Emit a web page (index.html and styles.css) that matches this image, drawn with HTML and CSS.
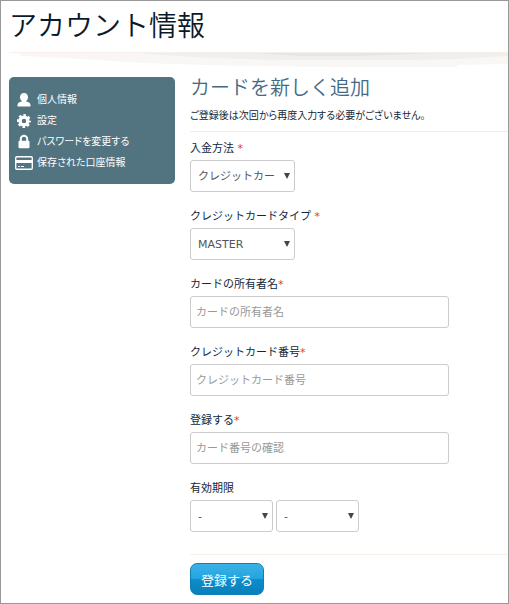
FILE: index.html
```html
<!DOCTYPE HTML>
<html lang="ja">
<head>
	<meta charset="utf-8">
	<title>アカウント情報</title>
	<link rel="stylesheet" href="styles.css">
</head>
<body>
	<header class="header">
		<h1>アカウント情報</h1>
		<svg class="header-shadow" viewBox="0 0 499 16" preserveAspectRatio="none" aria-hidden="true">
			<path fill="#f8f7f5" d="M10 1H499V12L448 13V15H326Q160 14 75 7L12 4z"/>
			<path fill="#efefed" d="M130 1H499V4L448 7L400 8H279Q180 6 130 1z"/>
			<path fill="#e5e6e4" d="M245 1H430L350 4H290z"/>
			<path fill="#fbeee8" d="M0 0H499V1H0z"/>
		</svg>
	</header>
	<div class="content">
		<ul class="menu">
			<li><a href="#">
				<svg class="menu-icon" viewBox="0 0 18 16" aria-hidden="true"><path fill="#fff" d="M9 1c2.500 0 4 1.700 4 4.200 0 1.700-.8 3-1.800 3.800v.4c2.700.5 4.300 1.600 4.300 3.800v1.300h-13v-1.300c0-2.200 1.600-3.300 4.300-3.800V9C5.800 8.200 5 6.900 5 5.200 5 2.700 6.500 1 9 1z"/></svg>
				個人情報</a></li>
			<li><a href="#">
				<svg class="menu-icon" viewBox="0 0 18 16" aria-hidden="true"><g fill="none" stroke="#fff"><circle cx="9" cy="8" r="3.900" stroke-width="3.400"/><circle cx="9" cy="8" r="6" stroke-width="2" stroke-dasharray="2.600 2.112" stroke-dashoffset="1.300"/></g></svg>
				設定</a></li>
			<li><a href="#">
				<svg class="menu-icon" viewBox="0 0 18 16" aria-hidden="true"><path fill="none" stroke="#fff" stroke-width="2" d="M5.800 8V5a3.200 3.200 0 0 1 6.400 0v3"/><rect x="3.500" y="6.800" width="11" height="7.400" rx="1" fill="#fff"/></svg>
				パスワードを変更する</a></li>
			<li><a href="#">
				<svg class="menu-icon" viewBox="0 0 18 16" aria-hidden="true"><rect x=".7" y="1.700" width="16.600" height="12.600" rx="1.200" fill="none" stroke="#fff" stroke-width="1.400"/><path fill="#fff" d="M1 5h16v3H1zM3 11h2v1H3zM6 11h3v1H6z"/></svg>
				保存された口座情報</a></li>
		</ul>
		<form class="form" action="#">
			<h2>カードを新しく追加</h2>
			<p class="note">ご登録後は次回から再度入力する必要がございません。</p>
			<div class="field">
				<label for="method">入金方法 <span class="required">*</span></label>
				<div class="select">
					<select id="method"><option>クレジットカード</option></select>
				</div>
			</div>
			<div class="field">
				<label for="type">クレジットカードタイプ <span class="required">*</span></label>
				<div class="select">
					<select id="type"><option>MASTER</option></select>
				</div>
			</div>
			<div class="field">
				<label for="owner">カードの所有者名<span class="required">*</span></label>
				<input type="text" id="owner" placeholder="カードの所有者名">
			</div>
			<div class="field">
				<label for="number">クレジットカード番号<span class="required">*</span></label>
				<input type="text" id="number" placeholder="クレジットカード番号">
			</div>
			<div class="field">
				<label for="confirm">登録する<span class="required">*</span></label>
				<input type="text" id="confirm" placeholder="カード番号の確認">
			</div>
			<div class="field">
				<label for="month">有効期限</label>
				<div class="expiry">
					<div class="select select-small">
						<select id="month"><option>-</option></select>
					</div>
					<div class="select select-small">
						<select id="year" aria-label="有効期限 年"><option>-</option></select>
					</div>
				</div>
			</div>
			<div class="actions">
				<button type="submit" class="button">登録する</button>
			</div>
		</form>
	</div>
</body>
</html>
```
FILE: styles.css
```css
* {
	box-sizing:border-box;
	}
body {
	margin:0;
	min-height:100vh;
	padding:0 0 8px 8px;
	border:1px solid #999;
	background:#fff;
	color:#12283a;
	font:11px/18px "DejaVu Sans", "Noto Sans CJK JP", sans-serif;
	}

/* Header */
h1 {
	margin:0;
	padding:3px 0 8px;
	color:#0a1a2a;
	font-family:"Noto Sans CJK JP", sans-serif;
	font-size:28px;
	font-weight:350;
	line-height:40px;
	}
.header-shadow {
	display:block;
	width:100%;
	height:16px;
	}

/* Columns */
.content {
	display:flex;
	align-items:flex-start;
	gap:15px;
	padding-top:9px;
	}

/* Menu */
.menu {
	flex:0 0 166px;
	margin:0;
	padding:12px 6px 11px;
	border-radius:5px;
	background:#527380;
	list-style:none;
	}
	.menu a {
		display:flex;
		align-items:center;
		gap:4px;
		height:21px;
		color:#fff;
		font-size:10px;
		font-feature-settings:"palt";
		text-decoration:none;
		}
	.menu-icon {
		width:18px;
		height:16px;
		}

/* Form */
.form {
	flex:1;
	min-width:0;
	}
	.form h2 {
		margin:0;
		color:#446a83;
		font-family:"Noto Sans CJK JP", sans-serif;
		font-size:20px;
		font-weight:350;
		line-height:20px;
		}
	.note {
		margin:0 0 8px;
		padding:10px 0 6px;
		border-bottom:1px solid #eee;
		font-size:10px;
		font-feature-settings:"palt";
		}
.field {
	margin-bottom:16px;
	}
	.field label {
		display:block;
		margin-bottom:2px;
		}
	.required {
		color:#d8422c;
		}
	.field input,
	.select select {
		display:block;
		width:100%;
		height:32px;
		margin:0;
		border:1px solid #ccc;
		border-radius:3px;
		background:#fff;
		color:#555;
		font:11px "DejaVu Sans", "Noto Sans CJK JP", sans-serif;
		}
	.field input {
		max-width:259px;
		padding:0 5px;
		}
	.field input::placeholder {
		color:#999;
		}

/* Select */
.select {
	position:relative;
	width:105px;
	}
	.select select {
		-webkit-appearance:none;
		appearance:none;
		padding:0 18px 0 7px;
		}
	.select:after {
		position:absolute;
		top:13px;
		right:5px;
		border:3px solid transparent;
		border-top:6px solid #444;
		border-bottom:0;
		content:'';
		pointer-events:none;
		}
.select-small {
	width:83px;
	}
.expiry {
	display:flex;
	gap:3px;
	}

/* Button */
.actions {
	margin-top:22px;
	padding-top:8px;
	border-top:1px solid #f8eeea;
	}
.button {
	display:block;
	height:32px;
	padding:0 10px;
	border:1px solid #0f7fb8;
	border-radius:7px;
	background:linear-gradient(#3bb2e6, #22a4e0 50%, #0d8dcb 50%, #0a7fbb);
	color:#fff;
	font:13px "Noto Sans CJK JP", sans-serif;
	}
```
